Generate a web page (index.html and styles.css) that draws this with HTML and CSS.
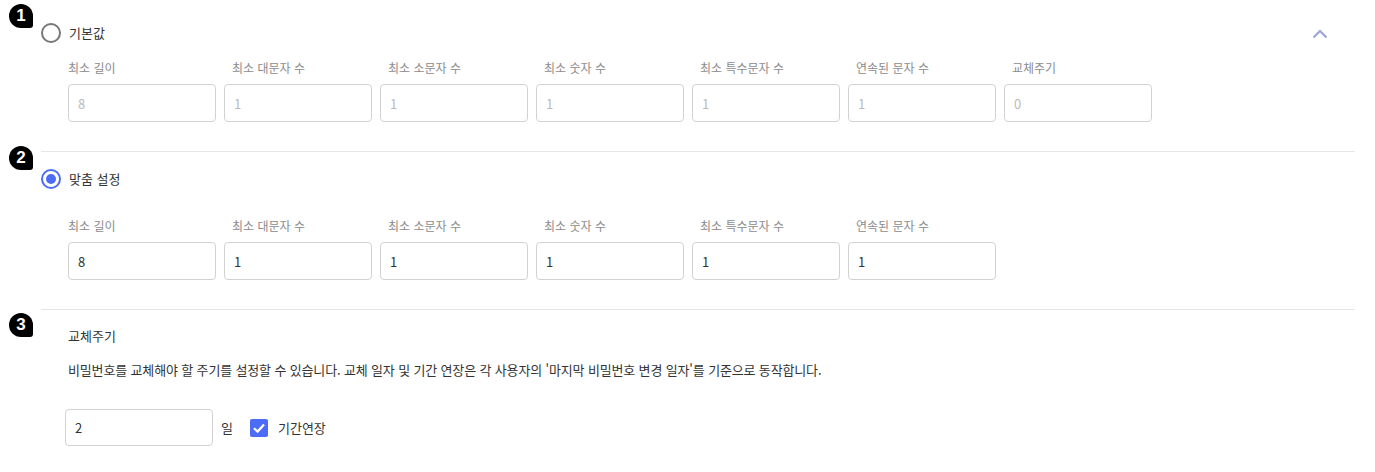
FILE: index.html
```html
<!DOCTYPE html>
<html lang="ko">
<head>
<meta charset="utf-8">
<title>비밀번호 정책</title>
<link rel="stylesheet" href="styles.css">
</head>
<body>
<div class="page">
  <section class="sec sec-default">
    <span class="badge badge-1">1</span>
    <div class="head">
      <label class="radio"><span class="radio-dot"></span><span class="radio-text">기본값</span></label>
      <svg class="chevron" width="16" height="10" viewBox="0 0 16 10"><path d="M1.5 8.5 L8 2 L14.5 8.5" fill="none" stroke="#9ea6d8" stroke-width="2.2"/></svg>
    </div>
    <div class="fields">
      <div class="field"><div class="flabel">최소 길이</div><div class="input muted">8</div></div>
      <div class="field"><div class="flabel">최소 대문자 수</div><div class="input muted">1</div></div>
      <div class="field"><div class="flabel">최소 소문자 수</div><div class="input muted">1</div></div>
      <div class="field"><div class="flabel">최소 숫자 수</div><div class="input muted">1</div></div>
      <div class="field"><div class="flabel">최소 특수문자 수</div><div class="input muted">1</div></div>
      <div class="field"><div class="flabel">연속된 문자 수</div><div class="input muted">1</div></div>
      <div class="field"><div class="flabel">교체주기</div><div class="input muted">0</div></div>
    </div>
  </section>
  <section class="sec sec-custom">
    <span class="badge badge-2">2</span>
    <div class="head">
      <label class="radio"><span class="radio-dot checked"></span><span class="radio-text">맞춤 설정</span></label>
    </div>
    <div class="fields fields-custom">
      <div class="field"><div class="flabel">최소 길이</div><div class="input">8</div></div>
      <div class="field"><div class="flabel">최소 대문자 수</div><div class="input">1</div></div>
      <div class="field"><div class="flabel">최소 소문자 수</div><div class="input">1</div></div>
      <div class="field"><div class="flabel">최소 숫자 수</div><div class="input">1</div></div>
      <div class="field"><div class="flabel">최소 특수문자 수</div><div class="input">1</div></div>
      <div class="field"><div class="flabel">연속된 문자 수</div><div class="input">1</div></div>
    </div>
  </section>
  <section class="sec sec-cycle">
    <span class="badge badge-3">3</span>
    <div class="cycle-title">교체주기</div>
    <p class="cycle-desc">비밀번호를 교체해야 할 주기를 설정할 수 있습니다. 교체 일자 및 기간 연장은 각 사용자의 '마지막 비밀번호 변경 일자'를 기준으로 동작합니다.</p>
    <div class="cycle-row">
      <div class="input">2</div>
      <span class="unit">일</span>
      <label class="check">
        <span class="check-box"><svg width="18" height="18" viewBox="0 0 18 18"><path d="M4 9.2 L7.6 12.6 L14 5.6" fill="none" stroke="#fff" stroke-width="2.2"/></svg></span>
        <span class="check-text">기간연장</span>
      </label>
    </div>
  </section>
</div>
</body>
</html>
```

FILE: styles.css
```css
* { box-sizing: border-box; }
html, body { margin: 0; padding: 0; background: #fff; }
body {
  font-family: "Noto Sans CJK KR", "Noto Sans", sans-serif;
  color: #333;
  font-size: 13px;
}
.page {
  position: relative;
  padding: 0 20px 0 41px;
}
.sec { position: relative; }
.sec + .sec { border-top: 1px solid #e6e6e6; }
.badge {
  position: absolute;
  left: -32px;
  width: 24px;
  height: 24px;
  background: #000;
  color: #fff;
  border-radius: 12px 12px 3px 12px;
  font-family: "Liberation Sans", Arial, sans-serif;
  font-weight: bold;
  font-size: 17px;
  line-height: 24px;
  text-align: center;
}
.badge-1 { top: 4px; }
.badge-2 { top: -6px; }
.badge-3 { top: 3px; }

.head {
  display: flex;
  align-items: center;
  justify-content: space-between;
  height: 20px;
}
.sec-default { padding-top: 23px; padding-bottom: 29px; }
.sec-custom { padding-top: 17px; padding-bottom: 29px; }
.chevron { margin-right: 27px; margin-top: 2px; }

.radio { display: flex; align-items: center; gap: 8px; }
.radio-dot {
  width: 20px; height: 20px;
  border: 2px solid #777;
  border-radius: 50%;
  display: flex; align-items: center; justify-content: center;
}
.radio-dot.checked { border-color: #4d6cf5; }
.radio-dot.checked::after {
  content: "";
  width: 10px; height: 10px;
  border-radius: 50%;
  background: #4d6cf5;
}
.radio-text { font-size: 13px; color: #333; line-height: 20px; }

.fields {
  display: flex;
  gap: 8px;
  padding-left: 27px;
  margin-top: 16px;
}
.fields-custom { margin-top: 28px; }
.field { width: 148px; display: flex; flex-direction: column; }
.field + .field .flabel { padding-left: 8px; }
.flabel {
  font-size: 12px;
  color: #8c8c8c;
  line-height: 17px;
  height: 17px;
  margin-bottom: 8px;
}
.input {
  width: 148px;
  height: 38px;
  border: 1px solid #d2d2d2;
  border-radius: 4px;
  padding: 0 9px;
  display: flex;
  align-items: center;
  font-size: 13px;
  color: #333;
}
.input.muted { color: #bbb; }

.sec-cycle { padding-top: 16px; padding-left: 27px; padding-bottom: 26px; }
.cycle-title { font-size: 13px; line-height: 20px; color: #333; }
.cycle-desc { margin: 14px 0 0; font-size: 13px; line-height: 20px; color: #333; letter-spacing: -0.15px; }
.cycle-row {
  display: flex;
  align-items: center;
  margin-top: 29px;
  margin-left: -3px;
}
.cycle-row .input { height: 37px; }
.unit { margin-left: 8px; font-size: 13px; }
.check { display: flex; align-items: center; gap: 10px; margin-left: 17px; }
.check-box {
  width: 18px; height: 18px;
  background: #4d6cf5;
  border-radius: 2px;
  display: flex;
}
.check-text { font-size: 13px; color: #333; }
```
